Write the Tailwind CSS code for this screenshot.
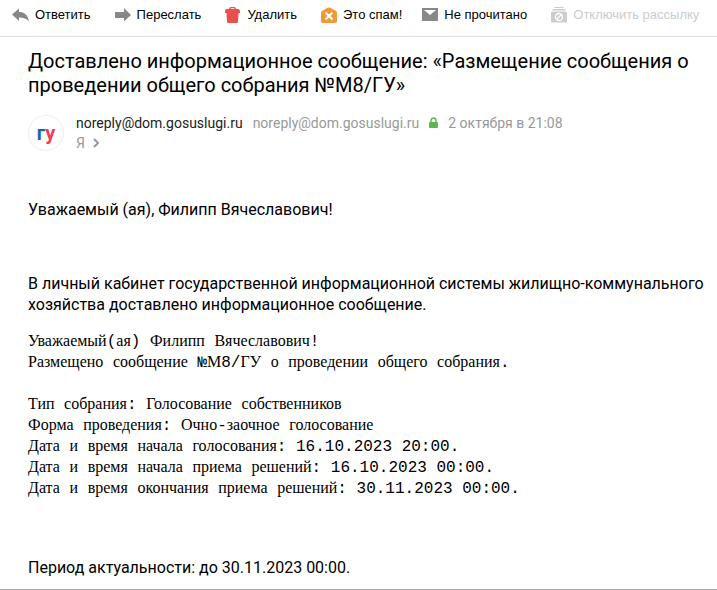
<!DOCTYPE html>
<html lang="ru">

<head>
  <meta charset="UTF-8" />
  <meta name="viewport" content="width=device-width, initial-scale=1.0" />
  <title>Почта - Размещение сообщения о проведении общего собрания</title>
  <script src="https://cdn.jsdelivr.net/npm/@tailwindcss/browser@4"></script>
</head>

<body class="bg-white text-black font-['Roboto',sans-serif]">
  <!-- Toolbar -->
  <header class="flex items-center h-[37px] pb-[7px] pl-3 border-b border-[#dddddd] whitespace-nowrap text-[13px] leading-5 font-['Liberation_Sans',Arial,sans-serif]">
    <button type="button" class="flex items-center gap-[6px] mr-6">
      <svg class="w-[17px] h-4 shrink-0" viewBox="0 0 17 16" fill="#888888"><path d="M0 7.500L7 1.500v3.500c5.500 0 8.500 2.500 10 9.500-2.500-3-5.500-4-10-4V14z" /></svg>
      Ответить
    </button>
    <button type="button" class="flex items-center gap-[6px] mr-6">
      <svg class="w-4 h-4 shrink-0" viewBox="0 0 16 16" fill="#888888"><path d="M0 5h9V1l7 7-7 6.500V11H0z" /></svg>
      Переслать
    </button>
    <button type="button" class="flex items-center gap-[6px] mr-6">
      <svg class="w-4 h-4 shrink-0" viewBox="0 0 16 16" fill="#e8504f"><path fill-rule="evenodd" d="M4 2Q4 0 6 0h3q2 0 2 2h2q2 0 2 3v1h-1.500L13 14.500Q12.900 16 11.500 16h-8Q2.100 16 2 14.500L1.500 6H0V5q0-3 2-3zM5.500 2h4q0-.8-.8-.8H6.300q-.8 0-.8.8z" /></svg>
      Удалить
    </button>
    <button type="button" class="flex items-center gap-[6px] mr-5">
      <svg class="w-4 h-4 shrink-0" viewBox="0 0 16 16"><path fill="#f09a37" d="M1 4l5.500-3.200q1.500-.8 3 0L15 4q1 .6 1 1.700V14q0 2-2 2H2q-2 0-2-2V5.700Q0 4.600 1 4z" /><path stroke="#ffffff" stroke-width="2" d="M4.500 5.500l7 7M11.500 5.500l-7 7" /></svg>
      Это спам!
    </button>
    <button type="button" class="flex items-center gap-[6px] mr-6">
      <svg class="w-4 h-4 shrink-0" viewBox="0 0 16 16"><path fill="#888888" d="M0 1h16v13H0z" /><path fill="#ffffff" d="M2 3h12L8 8z" /></svg>
      Не прочитано
    </button>
    <button type="button" disabled class="flex items-center gap-[6px] text-[#cccccc]">
      <svg class="w-4 h-4 shrink-0" viewBox="0 0 16 16" fill="#cccccc"><path d="M3.500 0h9v1h-9zM1.500 2h13v1.500h-13z" /><rect y="4.500" width="16" height="11" rx="1.500" /><circle cx="8" cy="10" r="3.500" fill="none" stroke="#ffffff" stroke-width="1.300" /><path stroke="#ffffff" stroke-width="1.300" d="M5.500 12.500l5-5" /></svg>
      Отключить рассылку
    </button>
  </header>

  <main class="pl-7 pr-3 pt-3 pb-[11px] border-b border-[#aaaaaa]">
    <h1 class="text-[20px] leading-6">Доставлено информационное сообщение: «Размещение сообщения о проведении общего собрания №М8/ГУ»</h1>

    <!-- Sender -->
    <section class="flex mt-4 gap-3">
      <div class="w-9 h-9 mt-[2px] rounded-full border border-[#eeeeee] flex items-center justify-center text-[20px] leading-6 font-bold shrink-0"><span class="text-[#1d63b0]">г</span><span class="text-[#ee3f58]">у</span></div>
      <div class="text-[14px] leading-5 text-[#999999]">
        <div class="flex items-center gap-[10px] whitespace-nowrap">
          <span class="text-[#222222]">noreply@dom.gosuslugi.ru</span>
          <span>noreply@dom.gosuslugi.ru</span>
          <svg class="w-[9px] h-3 shrink-0" viewBox="0 0 9 12"><rect y="5" width="9" height="6" rx="1" fill="#5ab94a" /><path d="M2 5.500V3.500a2.500 2.500 0 0 1 5 0v2" fill="none" stroke="#5ab94a" stroke-width="1.400" /></svg>
          <time datetime="2023-10-02T21:08">2 октября в 21:08</time>
        </div>
        <div class="flex items-center gap-2">
          Я
          <svg class="w-[6px] h-[10px]" viewBox="0 0 6 10" fill="none" stroke="#999999" stroke-width="2"><path d="M1 1l4 4-4 4" /></svg>
        </div>
      </div>
    </section>

    <!-- Message body -->
    <article class="mt-[46px] text-[16px] leading-[21px]">
      <p>Уважаемый (ая), Филипп Вячеславович!</p>
      <p class="mt-[53px]">В личный кабинет государственной информационной системы жилищно-коммунального хозяйства доставлено информационное сообщение.</p>
      <!-- words are serif, digits and punctuation are monospace -->
      <pre class="mt-[17px] font-['Liberation_Mono',monospace] [&_span]:font-['Liberation_Serif',serif] [&_span]:leading-none"><span>Уважаемый</span>(<span>ая</span>) <span>Филипп</span> <span>Вячеславович</span>!
<span>Размещено</span> <span>сообщение</span> №<span>М</span>8/<span>ГУ</span> <span>о</span> <span>проведении</span> <span>общего</span> <span>собрания</span>.

<span>Тип</span> <span>собрания</span>: <span>Голосование</span> <span>собственников</span>
<span>Форма</span> <span>проведения</span>: <span>Очно</span>-<span>заочное</span> <span>голосование</span>
<span>Дата</span> <span>и</span> <span>время</span> <span>начала</span> <span>голосования</span>: 16.10.2023 20:00.
<span>Дата</span> <span>и</span> <span>время</span> <span>начала</span> <span>приема</span> <span>решений</span>: 16.10.2023 00:00.
<span>Дата</span> <span>и</span> <span>время</span> <span>окончания</span> <span>приема</span> <span>решений</span>: 30.11.2023 00:00.</pre>
      <p class="mt-[57px]">Период актуальности: до 30.11.2023 00:00.</p>
    </article>
  </main>
</body>

</html>
